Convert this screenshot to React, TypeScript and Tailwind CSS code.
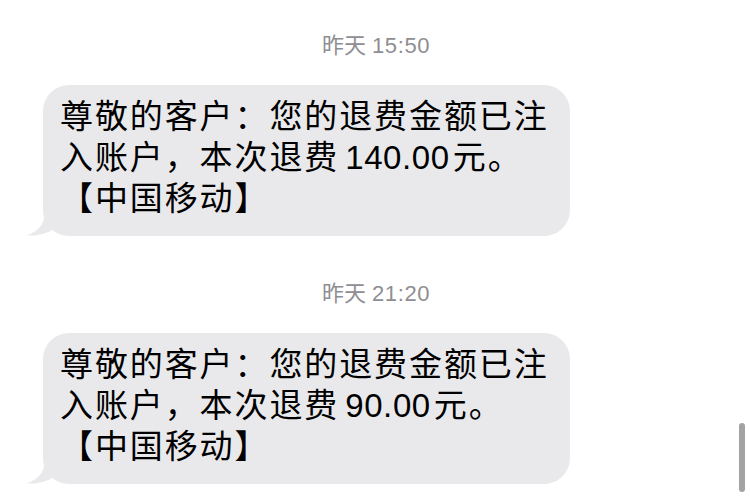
import React from 'react'

const messages = [
  { time: '15:50', amount: '140.00' },
  { time: '21:20', amount: '90.00' },
]

function Tail() {
  return (
    <svg className="absolute bottom-0 left-[-16px]" width="30" height="26" viewBox="0 0 30 26">
      <path d="M18 0 C18 12 14 20 0 25.5 C10 26 20 24 28 18 L28 0 Z" fill="#e9e9eb" />
    </svg>
  )
}

export default function App() {
  return (
    <div
      className="relative w-[750px] h-[500px] overflow-hidden bg-white"
      style={{ fontFamily: '"Liberation Sans", "Noto Sans CJK SC", sans-serif' }}
    >
      <div className="flex flex-col pt-[33px]">
        {messages.map((m, i) => (
          <div key={i} className={i > 0 ? 'mt-[45px]' : ''}>
            <div className="text-center text-[22px] leading-[26px] text-[#8e8e93] pl-[2px]">
              昨天 <span className="tracking-[0.6px]">{m.time}</span>
            </div>
            <div className="mt-[26px] ml-[43px] relative w-[527px]">
              <Tail />
              <div className="relative rounded-[26px] bg-[#e9e9eb] pl-[17px] pt-[11px] pb-[17px] text-[33px] leading-[41px] text-black">
                <div className="whitespace-nowrap tracking-[1.9px]">尊敬的客户：您的退费金额已注</div>
                <div className="whitespace-nowrap tracking-[1.9px]">
                  入账户，本次退费<span className="ml-[6px] mr-[3px] tracking-[0.6px]">{m.amount}</span>元。
                </div>
                <div className="whitespace-nowrap tracking-[1.9px]">【中国移动】</div>
              </div>
            </div>
          </div>
        ))}
      </div>
      <div className="absolute left-[739px] top-[423px] w-[6px] h-[69px] rounded-full bg-[#a3a3a3]" />
    </div>
  )
}
